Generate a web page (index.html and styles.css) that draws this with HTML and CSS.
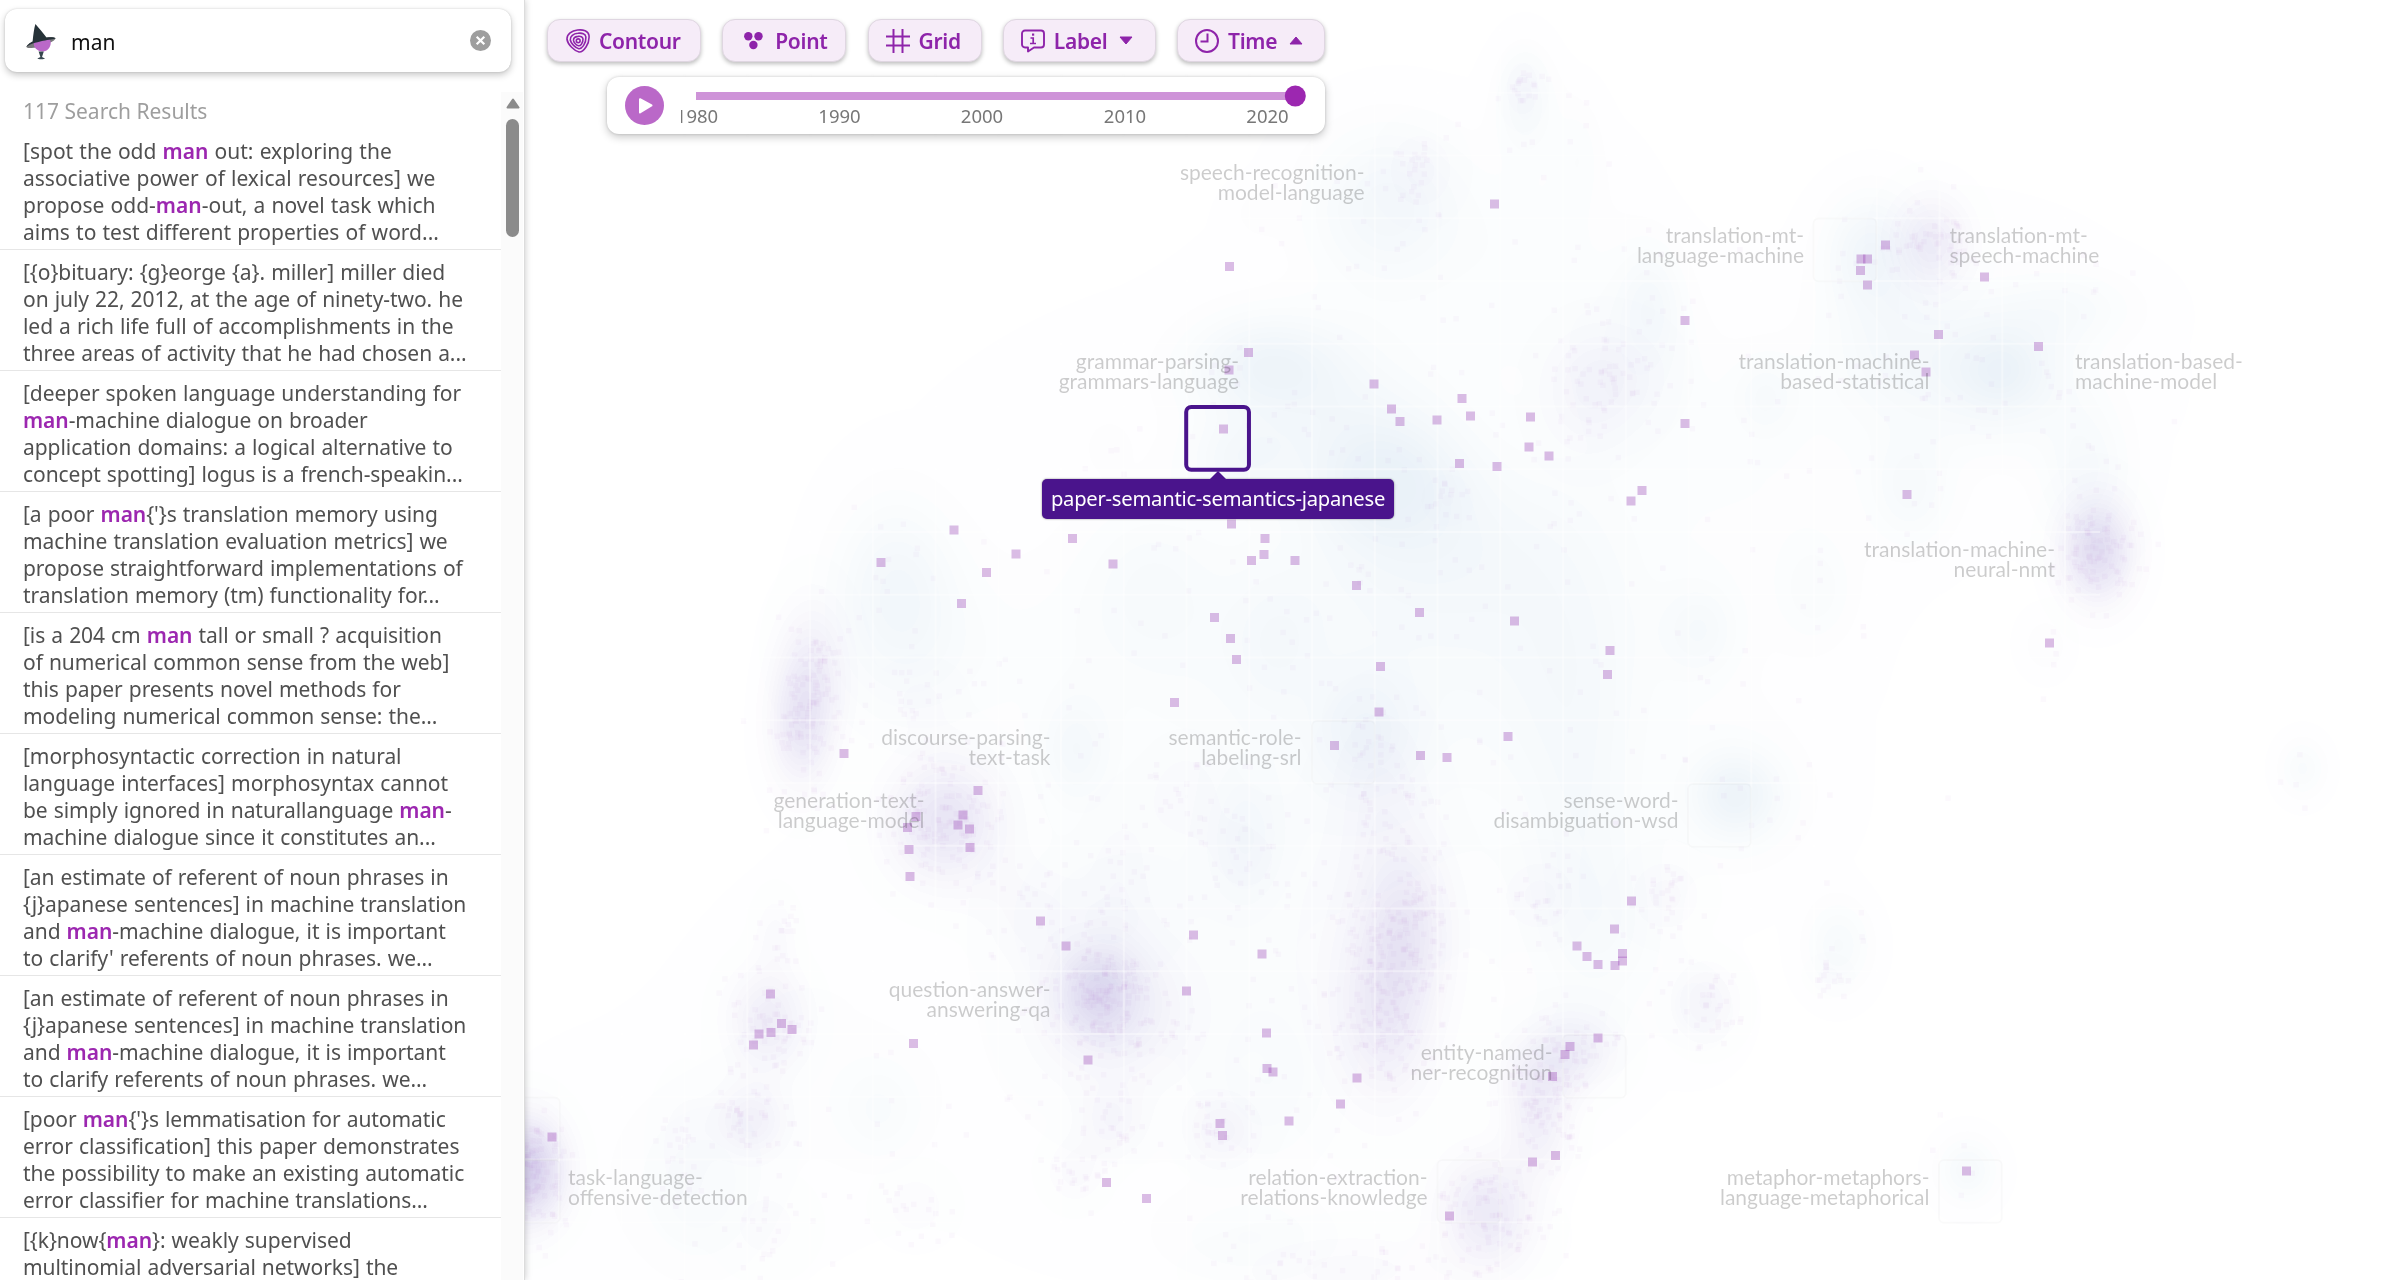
FILE: index.html
```html
<!DOCTYPE html>
<html lang="en">
<head>
<meta charset="utf-8">
<title>Paper map</title>
<link rel="stylesheet" href="styles.css">
</head>
<body>
<div class="app">
  <aside class="sidebar">
    <div class="search">
      <svg class="search-logo" width="32" height="38" viewBox="0 0 32 38">
        <ellipse cx="16" cy="19.5" rx="15" ry="3.6" transform="rotate(-17 16 19.5)" fill="#78797b"/>
        <path d="M8.6 19.5 L24.6 16 A8.3 8.3 0 0 1 17 28.4 A8.4 8.4 0 0 1 8.6 19.5Z" fill="#ba68c8"/>
        <path d="M1 24.6C3 20.5 6 19.2 7.6 18.4C8.3 12 9 5.500 10.400 1C14 5.500 18 9.500 21.500 14.600C25.500 13.800 29 14.200 30.800 15.400C28.500 16.500 24 16.200 18 17.800C10 19.800 4.500 21 1 24.600Z" fill="#263238"/>
        <path d="M13.600 28.600H18.800L17 34L20 35.600C20 36.600 12.400 36.600 12.400 35.600L15.400 34Z" fill="#37474f"/>
      </svg>
      <span class="search-text">man</span>
      <svg class="search-clear" width="21" height="21" viewBox="0 0 21 21"><circle cx="10.500" cy="10.500" r="10.500" fill="#9e9e9e"/><path d="M6.700 6.700L14.300 14.300M14.300 6.700L6.700 14.300" stroke="#fff" stroke-width="2.200"/></svg>
    </div>
    <div class="results">
      <div class="list">
        <div class="count">117 Search Results</div>
        <p class="item first">[spot the odd <b>man</b> out: exploring the<br>associative power of lexical resources] we<br>propose odd-<b>man</b>-out, a novel task which<br>aims to test different properties of word...</p>
        <p class="item">[{o}bituary: {g}eorge {a}. miller] miller died<br>on july 22, 2012, at the age of ninety-two. he<br>led a rich life full of accomplishments in the<br>three areas of activity that he had chosen a...</p>
        <p class="item">[deeper spoken language understanding for<br><b>man</b>-machine dialogue on broader<br>application domains: a logical alternative to<br>concept spotting] logus is a french-speakin...</p>
        <p class="item">[a poor <b>man</b>{'}s translation memory using<br>machine translation evaluation metrics] we<br>propose straightforward implementations of<br>translation memory (tm) functionality for...</p>
        <p class="item">[is a 204 cm <b>man</b> tall or small ? acquisition<br>of numerical common sense from the web]<br>this paper presents novel methods for<br>modeling numerical common sense: the...</p>
        <p class="item">[morphosyntactic correction in natural<br>language interfaces] morphosyntax cannot<br>be simply ignored in naturallanguage <b>man</b>-<br>machine dialogue since it constitutes an...</p>
        <p class="item">[an estimate of referent of noun phrases in<br>{j}apanese sentences] in machine translation<br>and <b>man</b>-machine dialogue, it is important<br>to clarify' referents of noun phrases. we...</p>
        <p class="item">[an estimate of referent of noun phrases in<br>{j}apanese sentences] in machine translation<br>and <b>man</b>-machine dialogue, it is important<br>to clarify referents of noun phrases. we...</p>
        <p class="item">[poor <b>man</b>{'}s lemmatisation for automatic<br>error classification] this paper demonstrates<br>the possibility to make an existing automatic<br>error classifier for machine translations...</p>
        <p class="item">[{k}now{<b>man</b>}: weakly supervised<br>multinomial adversarial networks] the</p>
      </div>
      <div class="scrollbar">
        <svg width="14" height="11" viewBox="0 0 14 11"><path d="M7 1.500L12.500 9.500H1.500Z" fill="#8b8b8b" stroke="#8b8b8b" stroke-width="2" stroke-linejoin="round"/></svg>
        <div class="thumb"></div>
      </div>
    </div>
  </aside>
  <main class="map">
    <canvas class="map-layer" id="contours" width="1871" height="1280"></canvas>
    <svg class="map-layer" id="overlay" width="1871" height="1280" viewBox="524 0 1871 1280"></svg>
    <div class="tooltip">paper-semantic-semantics-japanese</div>
    <div class="controls">
      <div class="toolbar">
        <button class="tool contour"><svg width="24" height="24" viewBox="0 0 24 24" fill="none" stroke="currentColor" stroke-width="1.600"><path d="M11.500 1C17 .4 22.500 1.500 23 6.500C23.400 11 22 15 20 18C18 21 15.500 23.300 13 23C8.500 22 1.800 15.500 1 10.500C.6 5 6 1.600 11.500 1Z"/><path d="M11.800 4.300C16 3.800 19.600 4.600 19.900 8C20.100 11.500 19 14.500 17.500 16.600C16 18.700 14.500 20 12.800 19.700C9.500 19 4.900 14.500 4.300 11C3.900 7 7.600 4.700 11.800 4.300Z"/><path d="M12 7.400C14.800 7 16.800 7.800 17 10C17.100 12.200 16.400 13.900 15.400 15.200C14.400 16.500 13.600 16.900 12.500 16.700C10.300 16.200 7.800 13.600 7.500 11.400C7.300 9 9.500 7.700 12 7.400Z"/><circle cx="12.200" cy="11.800" r="1.900"/></svg><span>Contour</span></button>
        <button class="tool point"><svg width="19" height="18" viewBox="0 0 19 18" fill="currentColor"><circle cx="4.300" cy="4.300" r="4.200"/><circle cx="14.500" cy="4.300" r="4.200"/><circle cx="9.400" cy="13" r="4.200"/></svg><span>Point</span></button>
        <button class="tool grid"><svg width="24" height="24" viewBox="0 0 24 24" fill="none" stroke="currentColor" stroke-width="2"><path d="M7.500 .5V23.500M16.500 .5V23.500M.5 7.500H23.500M.5 16.500H23.500" stroke-linecap="round"/></svg><span>Grid</span></button>
        <button class="tool label"><svg width="24" height="24" viewBox="0 0 24 24" fill="none" stroke="currentColor" stroke-width="1.900"><path d="M4 1.500H20A3 3 0 0 1 23 4.500V15.500A3 3 0 0 1 20 18.500H13L7 22.500V18.500H4A3 3 0 0 1 1 15.500V4.500A3 3 0 0 1 4 1.500Z" stroke-linejoin="round"/><path d="M9.500 9H12.200V14.300M9 14.500H15" stroke-width="1.700"/><path d="M11 4.500H13.200V6.700H11Z" fill="currentColor" stroke="none"/></svg><span>Label</span><svg class="caret" width="14" height="9" viewBox="0 0 14 9"><path d="M1 1H13L7 8Z" fill="currentColor" stroke="currentColor" stroke-linejoin="round"/></svg></button>
        <button class="tool time"><svg width="24" height="24" viewBox="0 0 24 24" fill="none" stroke="currentColor" stroke-width="2"><circle cx="12" cy="12" r="11"/><path d="M12.500 4.500V12.500H5.500"/></svg><span>Time</span><svg class="caret" width="14" height="9" viewBox="0 0 14 9"><path d="M1 8H13L7 1Z" fill="currentColor" stroke="currentColor" stroke-linejoin="round"/></svg></button>
      </div>
      <div class="timeline">
        <svg width="39" height="39" viewBox="0 0 39 39"><circle cx="19.500" cy="19.500" r="19.500" fill="#ba68c8"/><path d="M15 13.200L26.500 19.500L15 26.500Z" fill="#fff" stroke="#fff" stroke-width="2" stroke-linejoin="round"/></svg>
        <svg class="axis" width="630" height="54" viewBox="681 78 630 54">
          <rect x="696" y="91" width="599" height="8" fill="#ce93d8"/>
          <circle cx="1295.300" cy="95" r="10.500" fill="#9c27b0"/>
          <g class="ticks"><text x="697" y="121.500">1980</text><text x="839.500" y="121.500">1990</text><text x="982" y="121.500">2000</text><text x="1125" y="121.500">2010</text><text x="1267.500" y="121.500">2020</text></g>
        </svg>
      </div>
    </div>
  </main>
</div>
<script src="map.js"></script>
</body>
</html>
```
FILE: styles.css
```css
* { box-sizing: border-box; }
body { margin: 0; background: #fff; font-family: "Noto Sans", "Open Sans", sans-serif; overflow: hidden; }
.app { display: flex; width: 2395px; height: 1280px; }
.sidebar {
  width: 525px; height: 1280px; display: flex; flex-direction: column; overflow: hidden;
  background: #fff; border-right: 1px solid #dcdcdc; box-shadow: 0 0 7px rgba(0, 0, 0, .22);
  position: relative; z-index: 2; flex: none;
}
.search {
  margin: 9px 0 0 5px; width: 506px; height: 63px; border-radius: 12px; flex: none;
  display: flex; align-items: center; padding: 0 20px;
  box-shadow: 0 3px 7px rgba(0, 0, 0, .22), 0 0 2px rgba(0, 0, 0, .16);
}
.search-logo { margin-top: 2px; }
.search-text { font-size: 21px; margin: 2px 0 0 14px; flex: 1; color: #111; }
.results { display: flex; flex: 1; min-height: 0; margin-top: 20px; }
.list { width: 501px; overflow: hidden; }
.count { height: 42px; padding: 5px 0 0 23px; font-size: 21px; line-height: 28px; color: #9e9e9e; }
.item {
  margin: 0; height: 121px; padding: 9px 0 0 23px; border-bottom: 1px solid #e6e6e6;
  font-size: 21px; line-height: 27px; color: #505050; white-space: nowrap;
  letter-spacing: -.06px; word-spacing: .7px;
}
.first { height: 116px; padding-top: 4px; letter-spacing: 0; }
.item b { color: #9c27b0; font-weight: 600; }
.scrollbar { width: 22px; background: #fbfbfb; display: flex; flex-direction: column; align-items: center; padding: 6px 0 0 1px; gap: 10px; }
.thumb { width: 13px; height: 118px; border-radius: 7px; background: #8b8b8b; }
.map { flex: 1; position: relative; overflow: hidden; }
.map-layer { position: absolute; left: -1px; top: 0; }
.controls { position: relative; width: 800px; padding: 19px 0 0 22px; display: flex; flex-direction: column; }
.toolbar { display: flex; justify-content: space-between; }
.tool {
  height: 43px; border: 1px solid #dfd6e1; border-radius: 13px; background: #f6ecf8; color: #8e24aa;
  display: flex; align-items: center; gap: 9px; padding: 0 0 0 18px;
  font: 600 21px/40px "Noto Sans", "Open Sans", sans-serif; letter-spacing: -.3px;
  box-shadow: 0 2px 4px rgba(0, 0, 0, .26);
}
.tool svg { flex: none; }
.contour { width: 154px; }
.point { width: 124px; padding-left: 21px; gap: 12px; }
.grid { width: 114px; padding-left: 17px; }
.label { width: 153px; padding-left: 17px; }
.time { width: 148px; padding-left: 17px; }
.caret { margin: 0 0 1px 3px; }
.timeline {
  margin: 15px 0 0 60px; width: 718px; height: 57px; border-radius: 12px; background: #fff;
  display: flex; align-items: center; gap: 17px; padding-left: 18px;
  box-shadow: 0 3px 8px rgba(0, 0, 0, .22), 0 0 3px rgba(0, 0, 0, .16);
}
.axis { overflow: hidden; }
.ticks { font-size: 18.500px; fill: #777; text-anchor: middle; }
.tooltip {
  position: absolute; left: 517px; top: 479px; width: 352px; height: 40px; border-radius: 5px;
  background: #4a148c; color: #fff; font-size: 20.200px; letter-spacing: -.24px; line-height: 38px; text-align: center; white-space: nowrap;
  box-shadow: 0 0 2px rgba(0, 0, 0, .5);
}
.tooltip::before {
  content: ""; position: absolute; left: 168px; top: -8px;
  border: 8px solid transparent; border-top: 0; border-bottom-color: #4a148c;
}
.topic { font: 21px Lato, sans-serif; fill: #000; fill-opacity: .2; }
.paper { fill: #9c4bb8; fill-opacity: .37; }
.speck { fill: #a04bc0; fill-opacity: .036; }
.gridline { stroke: #fff; stroke-opacity: .38; stroke-width: 2; }
.cell { fill: none; stroke: #000; stroke-opacity: .018; stroke-width: 2; }
.selected { fill: none; stroke: #4a148c; stroke-width: 4; }
```
FILE: map.js
```js
const X0 = 524, W = 1871, H = 1280, CELL = 62.75;

// Density kernels: [x, y, sigmaX, sigmaY, weight]
const blue = [
  [1385,480,50,42,.45],[1440,540,90,60,.22],[1265,365,52,34,.4],[1330,410,70,50,.22],[1385,205,50,52,.32],
  [1240,460,36,28,.25],[1500,640,150,90,.12],[1570,700,45,120,.14],[895,580,40,58,.3],[910,650,55,60,.14],
  [1525,100,20,36,.24],[1578,150,16,38,.1],[1540,240,60,70,.08],[1650,300,22,40,.22],[1630,370,50,60,.16],
  [1870,250,30,38,.36],[1890,330,45,55,.18],[2003,370,42,40,.36],[2003,370,22,20,.1],[2070,308,45,26,.18],
  [1950,370,70,50,.14],[1765,395,22,28,.18],[1910,490,28,38,.22],[2085,470,30,50,.24],[1735,795,28,28,.4],
  [1740,800,55,50,.12],[1365,735,34,40,.3],[1075,750,24,36,.24],[1600,930,45,60,.2],[1585,820,35,70,.1],
  [1838,945,22,30,.24],[2302,768,16,20,.2],[1967,1170,20,22,.28],[1245,840,24,45,.2],[1150,580,45,50,.15],
  [1275,640,32,50,.14],[880,1110,30,35,.16],[1130,650,160,60,.08],[1815,590,26,36,.15],[1700,630,26,32,.2],
  [700,1190,45,60,.14],[1270,1080,40,60,.13],[1250,1240,60,30,.13],[1100,920,60,50,.1],[1260,830,180,90,.07],
  [1700,1010,24,30,.12],[1108,445,14,16,.06],[1256,212,18,18,.06],[1400,700,200,110,.06],[800,1060,70,90,.06],
  [1530,1240,20,20,.05],[1750,470,90,70,.07],[1570,1040,40,30,.12],[1120,1050,110,110,.06],[2045,645,16,20,.1],
  [1350,560,260,160,.07],[1250,980,260,150,.05],[1950,370,130,100,.06],[1450,300,110,110,.07],[640,1170,110,90,.04]
];
const purple = [
  [800,730,22,42,.42],[812,670,24,46,.34],[945,820,38,42,.55],[1097,990,28,32,.48],[1115,1010,52,50,.32],
  [1405,925,28,52,.36],[1385,1020,30,54,.32],[1375,960,55,95,.16],[767,1020,26,34,.38],[775,935,14,26,.12],
  [750,1120,24,24,.32],[526,1170,26,36,.95],[1572,1050,30,26,.32],[1537,1080,26,26,.28],[1538,1130,22,32,.3],
  [1487,1212,32,38,.46],[1931,242,26,32,.4],[2097,550,25,36,.68],[1612,375,36,34,.15],[1585,400,32,40,.12],
  [1420,170,24,28,.12],[1522,88,12,20,.13],[1705,1002,22,26,.2],[1828,975,14,12,.07],[1540,895,26,26,.12],
  [1665,895,26,26,.12],[1112,1120,22,24,.18],[1222,1130,24,24,.22],[1075,1170,20,22,.13],[1030,910,36,36,.12],
  [1185,795,26,32,.1],[920,700,26,24,.07],[685,1150,20,44,.1],[765,1225,30,30,.08],[915,1205,24,24,.09],
  [1380,790,30,55,.14],[1240,855,28,32,.08],[1350,1270,80,26,.12],[1120,880,24,50,.09],[1447,500,14,14,.06]
];

// Quantises a density into contour bands.
const step = v => {
  const s = .045, t = Math.max(0, v - .01);
  return t > 0 ? (Math.floor(t / s) + .6) * s : 0;
};
const field = (kernels) => {
  const f = new Float32Array(W * H);
  for (const [cx, cy, sx, sy, w] of kernels) {
    const x1 = Math.max(0, Math.floor(cx - X0 - 3 * sx)), x2 = Math.min(W - 1, Math.ceil(cx - X0 + 3 * sx));
    const y1 = Math.max(0, Math.floor(cy - 3 * sy)), y2 = Math.min(H - 1, Math.ceil(cy + 3 * sy));
    for (let y = y1; y <= y2; y++) for (let x = x1; x <= x2; x++) {
      const dx = (x + X0 - cx) / sx, dy = (y - cy) / sy, q = (dx * dx + dy * dy) / 2;
      if (q < 4.5) f[y * W + x] += w * (Math.exp(-q) - .0111);
    }
  }
  return f;
};
const ctx = document.getElementById('contours').getContext('2d');
const img = ctx.createImageData(W, H);
const fb = field(blue), fp = field(purple);
for (let i = 0; i < W * H; i++) {
  const b = Math.min(.62, step(fb[i])) * .88, p = Math.pow(Math.min(1, step(fp[i])), 1.15);
  img.data[i * 4] = Math.round(255 - 38 * b - 44 * p);
  img.data[i * 4 + 1] = Math.round(255 - 24 * b - 52 * p);
  img.data[i * 4 + 2] = Math.round(255 - 12 * b - 21 * p);
  img.data[i * 4 + 3] = 255;
}
ctx.putImageData(img, 0, 0);

const papers = [
  [1494.5,204],[1885.5,245],[1861,259],[1867.5,259],[1860.5,270.5],[1867.5,285],[1984.5,277],[1685,320.5],
  [1938.5,334.5],[2038.5,346.5],[1914.5,355],[1926,372],[1462,398.5],[1437,420],[1470.5,416],[1530.5,417],
  [1685,423.5],[1529,447],[1549,456],[1459.5,463.5],[1497,466.5],[1642,490.5],[1631,501],[1907,494.5],
  [1419.5,612.5],[1514.5,621],[2049.5,643],[1229.5,266.5],[1248.5,352.5],[1229,370],[1223.5,429],[1374,384],
  [1391.5,409],[1400,421.5],[1231.5,524],[1072.5,538.5],[1265,538.5],[1264,554.5],[1251.5,560.5],[1295,560.5],
  [1113,564],[1356.5,585.5],[1214.5,617.5],[1230.5,638.5],[1236.5,659.5],[954,530],[1016,554],[881,562.5],
  [986.5,572.5],[961.5,603.5],[1380.5,666.5],[1174.5,702.5],[1379,712],[1334.5,745.5],[1420.5,755.5],[844,753.5],
  [978,790.5],[916,816.5],[907.5,827.5],[963,815],[958,825],[969.5,829],[909,849.5],[970,847.5],[910,876.5],
  [1040.5,921],[1066,946],[1193.5,935],[1262,954],[770.5,994],[781.5,1023.5],[792,1029.5],[771,1032.5],
  [759,1034],[753.5,1045],[913.5,1043.5],[1186.5,991],[1088,1060],[1266.5,1033],[1267,1068.5],[1273,1072],
  [1357,1078],[1340.5,1104],[1289,1121],[1220,1123.5],[1222.5,1135.5],[552,1137],[1106.5,1182.5],[1146.5,1198.5],
  [1610,650.5],[1607.5,674.5],[1508,736.5],[1447,757.5],[1631.5,901],[1614.5,929],[1577,946],[1587,956.5],
  [1598,964.5],[1622.5,953.5],[1622.5,961],[1615,965.5],[1598,1038],[1570,1046.5],[1565,1054.5],[1552.5,1076.5],
  [1555.5,1155.5],[1532.5,1162],[1449.5,1216],[1966.5,1171]
];
// [x, first baseline, anchor, line 1, line 2]
const topics = [
  [1364.5,180,'end','speech-recognition-','model-language'],
  [1239,368.5,'end','grammar-parsing-','grammars-language'],
  [1804,243,'end','translation-mt-','language-machine'],
  [1949.5,243,'start','translation-mt-','speech-machine'],
  [1929.5,368.5,'end','translation-machine-','based-statistical'],
  [2075,368.5,'start','translation-based-','machine-model'],
  [2055,557,'end','translation-machine-','neural-nmt'],
  [1050.5,745,'end','discourse-parsing-','text-task'],
  [1301.5,745,'end','semantic-role-','labeling-srl'],
  [924.5,808,'end','generation-text-','language-model'],
  [1678.5,808,'end','sense-word-','disambiguation-wsd'],
  [1050.5,996.5,'end','question-answer-','answering-qa'],
  [1552.5,1059.5,'end','entity-named-','ner-recognition'],
  [568,1185,'start','task-language-','offensive-detection'],
  [1427.5,1185,'end','relation-extraction-','relations-knowledge'],
  [1929.5,1185,'end','metaphor-metaphors-','language-metaphorical']
];
const cells = [[1813.5,218.5],[1312,721],[1939,1160],[1437.5,1160],[1563,1035],[1688,784],[497,1097.5],[497,1160]];

let seed = 7;
const rnd = () => (seed = (seed * 16807) % 2147483647) / 2147483647;
const gauss = () => Math.sqrt(-2 * Math.log(rnd())) * Math.cos(6.283 * rnd());
let out = '';
const speck = (x, y) => { out += `<rect class="speck" x="${x.toFixed(1)}" y="${y.toFixed(1)}" width="5.5" height="5.5"/>`; };
for (const [x, y, sx, sy, w] of purple) for (let i = 0; i < 12 + w * sx * sy / 8; i++) speck(x + gauss() * sx * .8, y + gauss() * sy * .8);
for (const [x, y, sx, sy, w] of blue) for (let i = 0; i < 3 + w * sx * sy / 90; i++) speck(x + gauss() * sx, y + gauss() * sy);
for (let x = 1249.3 - 11 * CELL; x < 2100; x += CELL) out += `<line class="gridline" x1="${x}" x2="${x}" y1="0" y2="1280"/>`;
for (let y = 30; y < H; y += CELL) out += `<line class="gridline" x1="524" x2="2100" y1="${y}" y2="${y}"/>`;
for (const [x, y] of cells) out += `<rect class="cell" x="${x}" y="${y}" width="${CELL}" height="${CELL}" rx="5"/>`;
for (const [x, y] of papers) out += `<rect class="paper" x="${x - 4.5}" y="${y - 4.5}" width="9" height="9"/>`;
for (const [x, y, a, l1, l2] of topics) out += `<text class="topic" text-anchor="${a}"><tspan x="${x}" y="${y}">${l1}</tspan><tspan x="${x}" y="${y + 20}">${l2}</tspan></text>`;
out += '<rect class="selected" x="1186.200" y="407" width="62.750" height="62.750" rx="5"/>';
document.getElementById('overlay').innerHTML = out;
```
